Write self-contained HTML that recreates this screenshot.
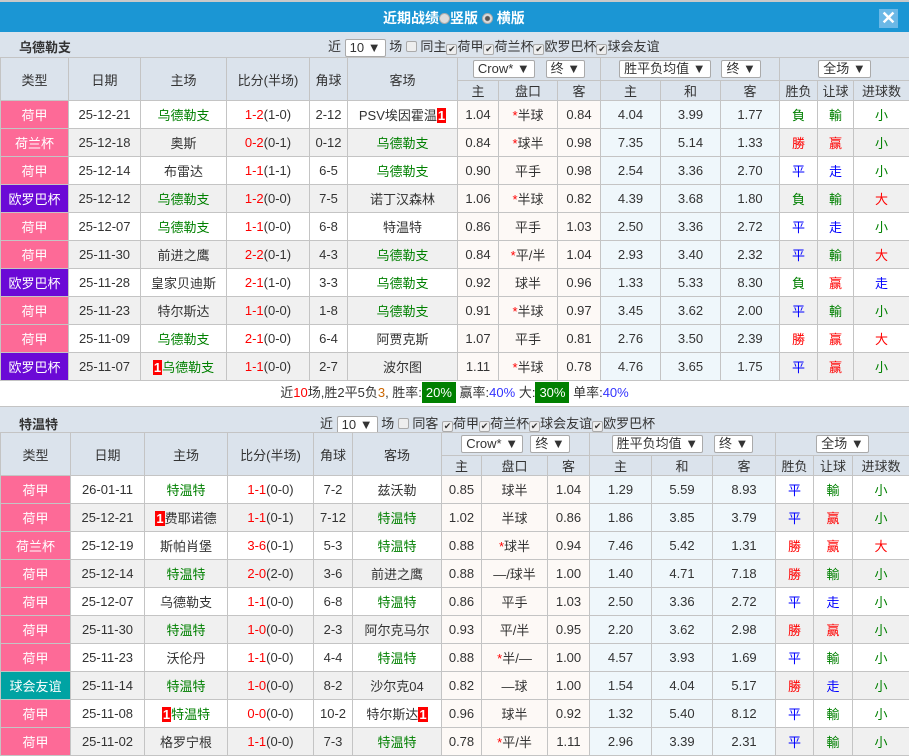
<!DOCTYPE html>
<html><head><meta charset="utf-8">
<style>
*{margin:0;padding:0;box-sizing:border-box}
body{width:909px;height:755px;overflow:hidden;background:#fff;font-family:"Liberation Sans","Noto Sans CJK SC",sans-serif;font-size:13px;color:#333;position:relative}
.top{position:absolute;left:0;top:0;width:909px;height:32px;background:#1b96d4;border-top:2px solid #c9c9c9}
.top .tt{position:absolute;left:383px;top:6px;color:#fff;font-weight:bold;font-size:14px;white-space:nowrap}
.rad{display:inline-block;width:11px;height:11px;border-radius:50%;background:#ddd;border:1px solid #aaa;vertical-align:-1px}
.rad.on{background:radial-gradient(circle,#555 0 2px,#ddd 3px)}
.x{position:absolute;left:879px;top:7px;width:19px;height:19px;background:#6bb8e6;color:#fff;font-size:18px;line-height:19px;text-align:center;font-weight:bold}
.bar{position:absolute;left:0;width:909px;height:25px;background:#dbe3ec}
.bar b{position:absolute;left:19px;top:5px;font-size:13px;color:#333}
.ctl{position:absolute;top:4px;white-space:nowrap;font-size:13px}
.sel{display:inline-block;background:#fff;border:1px solid #aaa;height:18px;line-height:16px;padding:0 4px;font-size:13px;vertical-align:middle;border-radius:2px}
.cb{display:inline-block;width:11px;height:11px;border:1px solid #aaa;background:#eee;border-radius:2px;vertical-align:-1px;font-size:9px;line-height:9px;text-align:center;color:#333}
table{position:absolute;left:0;border-collapse:collapse;table-layout:fixed;width:909px}
td{border:1px solid #c4c4c4;text-align:center;white-space:nowrap;overflow:hidden;padding:0}
thead td{background:#dbe3ec;color:#333}
tr.h1{height:23px} tr.h2{height:19px}
tbody tr{height:28px}
tbody tr:nth-child(even) td{background:#f0f0f0}
tbody tr td.o1{background:#fdf9f6!important}
tbody tr td.o2{background:#eff7fb!important}
td.lg{color:#fff!important;background:#fd6a97!important}
td.lp{color:#fff!important;background:#6b09d6!important}
td.lt{color:#fff!important;background:#00a3a3!important}
.g{color:#008000}.r{color:#f00}.b{color:#00f}.n{color:#333}
.one{background:#f00;color:#fff;font-weight:bold;padding:0 1px}
.sum{position:absolute;left:0;top:379px;width:909px;height:27px;text-align:center;line-height:27px;font-size:13px}
.gb{background:#008000;color:#fff;padding:3px 4px}
.bl{color:#33f}
</style></head><body>
<div class="top"><div class="tt">近期战绩<span class="rad"></span>竖版 <span class="rad on"></span> 横版</div><div class="x">✕</div></div>

<div class="bar" style="top:32px"><b>乌德勒支</b>
<div class="ctl" style="left:328px">近 <span class="sel">10 ▼</span> 场 <span class="cb"></span> 同主<span class="cb">✔</span>荷甲<span class="cb">✔</span>荷兰杯<span class="cb">✔</span>欧罗巴杯<span class="cb">✔</span>球会友谊</div></div>

<table style="top:57px">
<colgroup><col style="width:68px"><col style="width:72px"><col style="width:86px"><col style="width:83px"><col style="width:38px"><col style="width:110px"><col style="width:41px"><col style="width:59px"><col style="width:43px"><col style="width:60px"><col style="width:60px"><col style="width:59px"><col style="width:38px"><col style="width:36px"><col style="width:56px"></colgroup>
<thead>
<tr class="h1"><td rowspan="2">类型</td><td rowspan="2">日期</td><td rowspan="2">主场</td><td rowspan="2">比分(半场)</td><td rowspan="2">角球</td><td rowspan="2">客场</td><td colspan="3"><span class="sel">Crow* ▼</span>&nbsp;&nbsp;&nbsp;<span class="sel">终 ▼</span></td><td colspan="3"><span class="sel">胜平负均值 ▼</span>&nbsp;&nbsp;&nbsp;<span class="sel">终 ▼</span></td><td colspan="3"><span class="sel">全场 ▼</span></td></tr>
<tr class="h2"><td>主</td><td>盘口</td><td>客</td><td>主</td><td>和</td><td>客</td><td>胜负</td><td>让球</td><td>进球数</td></tr>
</thead>
<tbody>
<tr><td class="lg">荷甲</td><td>25-12-21</td><td class="g">乌德勒支</td><td><span class="r">1-2</span>(1-0)</td><td>2-12</td><td>PSV埃因霍温<span class="one">1</span></td><td class="o1">1.04</td><td class="o1"><span class="r">*</span>半球</td><td class="o1">0.84</td><td class="o2">4.04</td><td class="o2">3.99</td><td class="o2">1.77</td><td class="g">負</td><td class="g">輸</td><td class="g">小</td></tr>
<tr><td class="lg">荷兰杯</td><td>25-12-18</td><td>奥斯</td><td><span class="r">0-2</span>(0-1)</td><td>0-12</td><td class="g">乌德勒支</td><td class="o1">0.84</td><td class="o1"><span class="r">*</span>球半</td><td class="o1">0.98</td><td class="o2">7.35</td><td class="o2">5.14</td><td class="o2">1.33</td><td class="r">勝</td><td class="r">赢</td><td class="g">小</td></tr>
<tr><td class="lg">荷甲</td><td>25-12-14</td><td>布雷达</td><td><span class="r">1-1</span>(1-1)</td><td>6-5</td><td class="g">乌德勒支</td><td class="o1">0.90</td><td class="o1">平手</td><td class="o1">0.98</td><td class="o2">2.54</td><td class="o2">3.36</td><td class="o2">2.70</td><td class="b">平</td><td class="b">走</td><td class="g">小</td></tr>
<tr><td class="lp">欧罗巴杯</td><td>25-12-12</td><td class="g">乌德勒支</td><td><span class="r">1-2</span>(0-0)</td><td>7-5</td><td>诺丁汉森林</td><td class="o1">1.06</td><td class="o1"><span class="r">*</span>半球</td><td class="o1">0.82</td><td class="o2">4.39</td><td class="o2">3.68</td><td class="o2">1.80</td><td class="g">負</td><td class="g">輸</td><td class="r">大</td></tr>
<tr><td class="lg">荷甲</td><td>25-12-07</td><td class="g">乌德勒支</td><td><span class="r">1-1</span>(0-0)</td><td>6-8</td><td>特温特</td><td class="o1">0.86</td><td class="o1">平手</td><td class="o1">1.03</td><td class="o2">2.50</td><td class="o2">3.36</td><td class="o2">2.72</td><td class="b">平</td><td class="b">走</td><td class="g">小</td></tr>
<tr><td class="lg">荷甲</td><td>25-11-30</td><td>前进之鹰</td><td><span class="r">2-2</span>(0-1)</td><td>4-3</td><td class="g">乌德勒支</td><td class="o1">0.84</td><td class="o1"><span class="r">*</span>平/半</td><td class="o1">1.04</td><td class="o2">2.93</td><td class="o2">3.40</td><td class="o2">2.32</td><td class="b">平</td><td class="g">輸</td><td class="r">大</td></tr>
<tr><td class="lp">欧罗巴杯</td><td>25-11-28</td><td>皇家贝迪斯</td><td><span class="r">2-1</span>(1-0)</td><td>3-3</td><td class="g">乌德勒支</td><td class="o1">0.92</td><td class="o1">球半</td><td class="o1">0.96</td><td class="o2">1.33</td><td class="o2">5.33</td><td class="o2">8.30</td><td class="g">負</td><td class="r">赢</td><td class="b">走</td></tr>
<tr><td class="lg">荷甲</td><td>25-11-23</td><td>特尔斯达</td><td><span class="r">1-1</span>(0-0)</td><td>1-8</td><td class="g">乌德勒支</td><td class="o1">0.91</td><td class="o1"><span class="r">*</span>半球</td><td class="o1">0.97</td><td class="o2">3.45</td><td class="o2">3.62</td><td class="o2">2.00</td><td class="b">平</td><td class="g">輸</td><td class="g">小</td></tr>
<tr><td class="lg">荷甲</td><td>25-11-09</td><td class="g">乌德勒支</td><td><span class="r">2-1</span>(0-0)</td><td>6-4</td><td>阿贾克斯</td><td class="o1">1.07</td><td class="o1">平手</td><td class="o1">0.81</td><td class="o2">2.76</td><td class="o2">3.50</td><td class="o2">2.39</td><td class="r">勝</td><td class="r">赢</td><td class="r">大</td></tr>
<tr><td class="lp">欧罗巴杯</td><td>25-11-07</td><td class="g"><span class="one">1</span>乌德勒支</td><td><span class="r">1-1</span>(0-0)</td><td>2-7</td><td>波尔图</td><td class="o1">1.11</td><td class="o1"><span class="r">*</span>半球</td><td class="o1">0.78</td><td class="o2">4.76</td><td class="o2">3.65</td><td class="o2">1.75</td><td class="b">平</td><td class="r">赢</td><td class="g">小</td></tr>
</tbody></table>

<div class="sum">近<span class="r">10</span>场,胜<span class="n">2</span>平5负<span style="color:#c60">3</span>, 胜率:<span class="gb">20%</span> 赢率:<span class="bl">40%</span> 大:<span class="gb">30%</span> 单率:<span class="bl">40%</span></div>

<div class="bar" style="top:406px;height:26px;border-top:1px solid #c4c4c4"><b style="top:7px">特温特</b>
<div class="ctl" style="left:320px;top:6px">近 <span class="sel">10 ▼</span> 场 <span class="cb"></span> 同客 <span class="cb">✔</span>荷甲<span class="cb">✔</span>荷兰杯<span class="cb">✔</span>球会友谊<span class="cb">✔</span>欧罗巴杯</div></div>

<table style="top:432px">
<colgroup><col style="width:70px"><col style="width:74px"><col style="width:83px"><col style="width:86px"><col style="width:39px"><col style="width:89px"><col style="width:40px"><col style="width:66px"><col style="width:42px"><col style="width:62px"><col style="width:61px"><col style="width:63px"><col style="width:38px"><col style="width:39px"><col style="width:57px"></colgroup>
<thead>
<tr class="h1"><td rowspan="2">类型</td><td rowspan="2">日期</td><td rowspan="2">主场</td><td rowspan="2">比分(半场)</td><td rowspan="2">角球</td><td rowspan="2">客场</td><td colspan="3"><span class="sel">Crow* ▼</span>&nbsp;&nbsp;<span class="sel">终 ▼</span></td><td colspan="3"><span class="sel">胜平负均值 ▼</span>&nbsp;&nbsp;&nbsp;<span class="sel">终 ▼</span></td><td colspan="3"><span class="sel">全场 ▼</span></td></tr>
<tr class="h2"><td>主</td><td>盘口</td><td>客</td><td>主</td><td>和</td><td>客</td><td>胜负</td><td>让球</td><td>进球数</td></tr>
</thead>
<tbody>
<tr><td class="lg">荷甲</td><td>26-01-11</td><td class="g">特温特</td><td><span class="r">1-1</span>(0-0)</td><td>7-2</td><td>兹沃勒</td><td class="o1">0.85</td><td class="o1">球半</td><td class="o1">1.04</td><td class="o2">1.29</td><td class="o2">5.59</td><td class="o2">8.93</td><td class="b">平</td><td class="g">輸</td><td class="g">小</td></tr>
<tr><td class="lg">荷甲</td><td>25-12-21</td><td><span class="one">1</span>费耶诺德</td><td><span class="r">1-1</span>(0-1)</td><td>7-12</td><td class="g">特温特</td><td class="o1">1.02</td><td class="o1">半球</td><td class="o1">0.86</td><td class="o2">1.86</td><td class="o2">3.85</td><td class="o2">3.79</td><td class="b">平</td><td class="r">赢</td><td class="g">小</td></tr>
<tr><td class="lg">荷兰杯</td><td>25-12-19</td><td>斯帕肖堡</td><td><span class="r">3-6</span>(0-1)</td><td>5-3</td><td class="g">特温特</td><td class="o1">0.88</td><td class="o1"><span class="r">*</span>球半</td><td class="o1">0.94</td><td class="o2">7.46</td><td class="o2">5.42</td><td class="o2">1.31</td><td class="r">勝</td><td class="r">赢</td><td class="r">大</td></tr>
<tr><td class="lg">荷甲</td><td>25-12-14</td><td class="g">特温特</td><td><span class="r">2-0</span>(2-0)</td><td>3-6</td><td>前进之鹰</td><td class="o1">0.88</td><td class="o1">—/球半</td><td class="o1">1.00</td><td class="o2">1.40</td><td class="o2">4.71</td><td class="o2">7.18</td><td class="r">勝</td><td class="g">輸</td><td class="g">小</td></tr>
<tr><td class="lg">荷甲</td><td>25-12-07</td><td>乌德勒支</td><td><span class="r">1-1</span>(0-0)</td><td>6-8</td><td class="g">特温特</td><td class="o1">0.86</td><td class="o1">平手</td><td class="o1">1.03</td><td class="o2">2.50</td><td class="o2">3.36</td><td class="o2">2.72</td><td class="b">平</td><td class="b">走</td><td class="g">小</td></tr>
<tr><td class="lg">荷甲</td><td>25-11-30</td><td class="g">特温特</td><td><span class="r">1-0</span>(0-0)</td><td>2-3</td><td>阿尔克马尔</td><td class="o1">0.93</td><td class="o1">平/半</td><td class="o1">0.95</td><td class="o2">2.20</td><td class="o2">3.62</td><td class="o2">2.98</td><td class="r">勝</td><td class="r">赢</td><td class="g">小</td></tr>
<tr><td class="lg">荷甲</td><td>25-11-23</td><td>沃伦丹</td><td><span class="r">1-1</span>(0-0)</td><td>4-4</td><td class="g">特温特</td><td class="o1">0.88</td><td class="o1"><span class="r">*</span>半/—</td><td class="o1">1.00</td><td class="o2">4.57</td><td class="o2">3.93</td><td class="o2">1.69</td><td class="b">平</td><td class="g">輸</td><td class="g">小</td></tr>
<tr><td class="lt">球会友谊</td><td>25-11-14</td><td class="g">特温特</td><td><span class="r">1-0</span>(0-0)</td><td>8-2</td><td>沙尔克04</td><td class="o1">0.82</td><td class="o1">—球</td><td class="o1">1.00</td><td class="o2">1.54</td><td class="o2">4.04</td><td class="o2">5.17</td><td class="r">勝</td><td class="b">走</td><td class="g">小</td></tr>
<tr><td class="lg">荷甲</td><td>25-11-08</td><td class="g"><span class="one">1</span>特温特</td><td><span class="r">0-0</span>(0-0)</td><td>10-2</td><td>特尔斯达<span class="one">1</span></td><td class="o1">0.96</td><td class="o1">球半</td><td class="o1">0.92</td><td class="o2">1.32</td><td class="o2">5.40</td><td class="o2">8.12</td><td class="b">平</td><td class="g">輸</td><td class="g">小</td></tr>
<tr><td class="lg">荷甲</td><td>25-11-02</td><td>格罗宁根</td><td><span class="r">1-1</span>(0-0)</td><td>7-3</td><td class="g">特温特</td><td class="o1">0.78</td><td class="o1"><span class="r">*</span>平/半</td><td class="o1">1.11</td><td class="o2">2.96</td><td class="o2">3.39</td><td class="o2">2.31</td><td class="b">平</td><td class="g">輸</td><td class="g">小</td></tr>
</tbody></table>
</body></html>
